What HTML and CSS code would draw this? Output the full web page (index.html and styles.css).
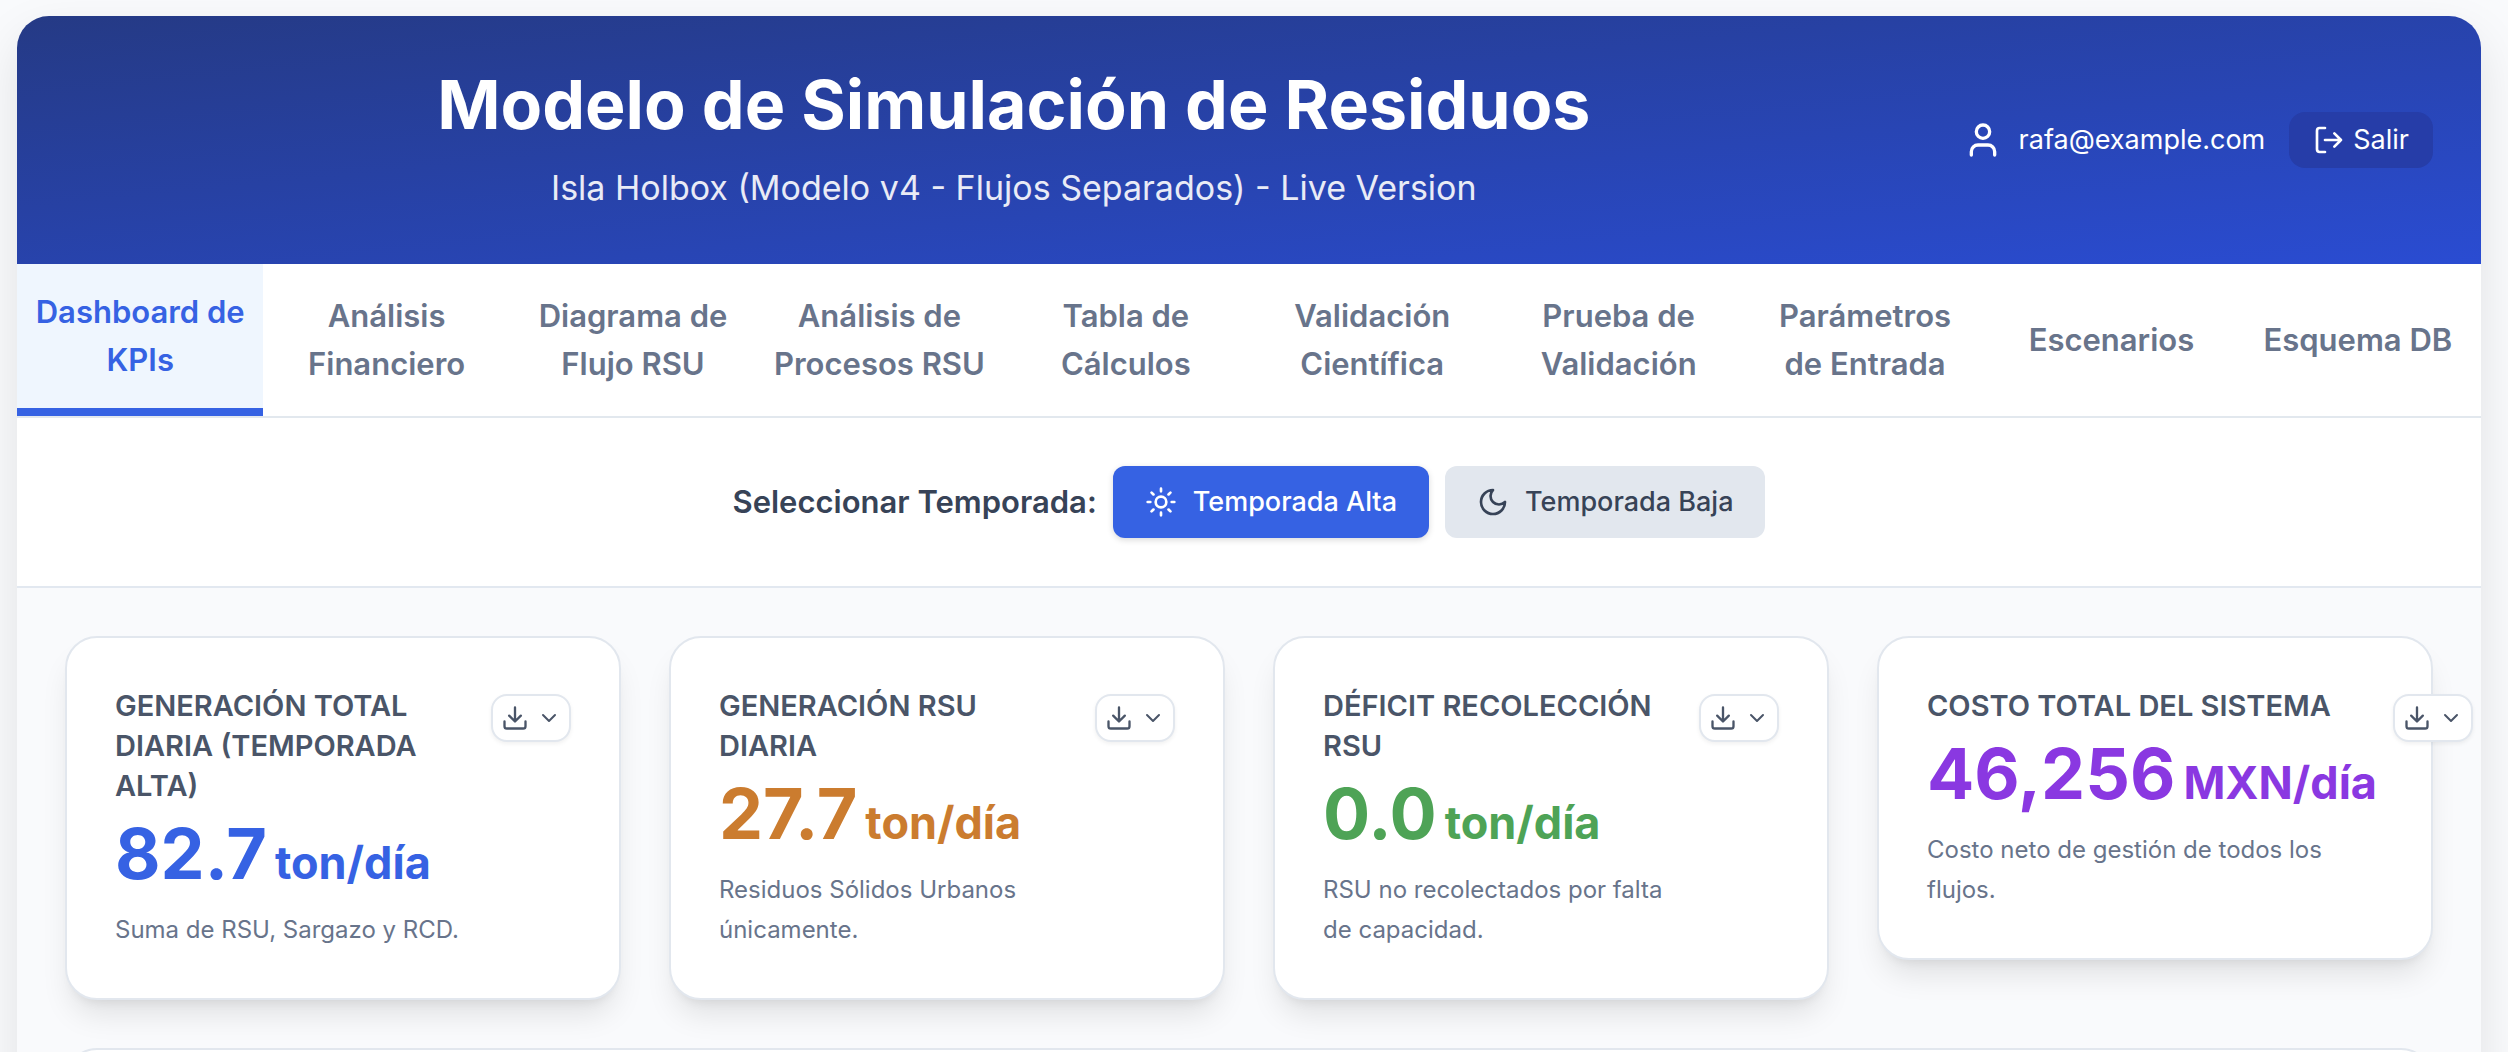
FILE: index.html
```html
<!DOCTYPE html>
<html lang="es">
<head>
<meta charset="utf-8">
<meta name="viewport" content="width=device-width, initial-scale=1">
<title>Modelo de Simulación de Residuos</title>
<link rel="stylesheet" href="styles.css">
</head>
<body>
<svg class="sprite" aria-hidden="true">
  <symbol id="user" viewBox="0 0 24 24"><circle cx="12" cy="7" r="4"/><path d="M19 21v-2a4 4 0 0 0-4-4H9a4 4 0 0 0-4 4v2"/></symbol>
  <symbol id="logout" viewBox="0 0 24 24"><path d="M9 21H5a2 2 0 0 1-2-2V5a2 2 0 0 1 2-2h4"/><path d="M16 17l5-5-5-5M21 12H9"/></symbol>
  <symbol id="sun" viewBox="0 0 24 24"><circle cx="12" cy="12" r="4"/><path d="M12 2v2M12 20v2M4.93 4.93l1.41 1.41M17.66 17.66l1.41 1.41M2 12h2M20 12h2M6.34 17.66l-1.41 1.41M19.07 4.93l-1.41 1.41"/></symbol>
  <symbol id="moon" viewBox="0 0 24 24"><path d="M12 3a6 6 0 0 0 9 9 9 9 0 1 1-9-9Z"/></symbol>
  <symbol id="download" viewBox="0 0 24 24"><path d="M21 15v4a2 2 0 0 1-2 2H5a2 2 0 0 1-2-2v-4M7 10l5 5 5-5M12 15V3"/></symbol>
  <symbol id="chevron" viewBox="0 0 24 24"><path d="M6 9l6 6 6-6"/></symbol>
</svg>
<div class="app">
  <header class="header">
    <div class="header-text">
      <h1>Modelo de Simulación de Residuos</h1>
      <p>Isla Holbox (Modelo v4 - Flujos Separados) - Live Version</p>
    </div>
    <div class="account">
      <div class="account-user">
        <svg class="icon icon-xl" aria-hidden="true"><use href="#user"/></svg>
        <span>rafa@example.com</span>
      </div>
      <button class="logout" type="button"><svg class="icon icon-lg" aria-hidden="true"><use href="#logout"/></svg>Salir</button>
    </div>
  </header>

  <nav class="tabs">
    <button class="tab active" type="button">Dashboard de KPIs</button>
    <button class="tab" type="button">Análisis Financiero</button>
    <button class="tab" type="button">Diagrama de Flujo RSU</button>
    <button class="tab" type="button">Análisis de Procesos RSU</button>
    <button class="tab" type="button">Tabla de Cálculos</button>
    <button class="tab" type="button">Validación Científica</button>
    <button class="tab" type="button">Prueba de Validación</button>
    <button class="tab" type="button">Parámetros de Entrada</button>
    <button class="tab" type="button">Escenarios</button>
    <button class="tab" type="button">Esquema DB</button>
  </nav>

  <section class="season">
    <span class="season-label">Seleccionar Temporada:</span>
    <button class="season-btn selected" type="button"><svg class="icon icon-lg" aria-hidden="true"><use href="#sun"/></svg>Temporada Alta</button>
    <button class="season-btn" type="button"><svg class="icon icon-lg" aria-hidden="true"><use href="#moon"/></svg>Temporada Baja</button>
  </section>

  <main class="content">
    <div class="kpis">
      <article class="card kpi">
        <div class="kpi-body">
          <h2>Generación Total Diaria (Temporada Alta)</h2>
          <p class="value blue">82.7<span class="unit">ton/día</span></p>
          <p class="note">Suma de RSU, Sargazo y RCD.</p>
        </div>
        <button class="export" type="button" aria-label="Exportar"><svg class="icon icon-md" aria-hidden="true"><use href="#download"/></svg><svg class="icon icon-sm" aria-hidden="true"><use href="#chevron"/></svg></button>
      </article>
      <article class="card kpi">
        <div class="kpi-body">
          <h2>Generación RSU Diaria</h2>
          <p class="value orange">27.7<span class="unit">ton/día</span></p>
          <p class="note">Residuos Sólidos Urbanos únicamente.</p>
        </div>
        <button class="export" type="button" aria-label="Exportar"><svg class="icon icon-md" aria-hidden="true"><use href="#download"/></svg><svg class="icon icon-sm" aria-hidden="true"><use href="#chevron"/></svg></button>
      </article>
      <article class="card kpi">
        <div class="kpi-body">
          <h2>Déficit Recolección RSU</h2>
          <p class="value green">0.0<span class="unit">ton/día</span></p>
          <p class="note">RSU no recolectados por falta de capacidad.</p>
        </div>
        <button class="export" type="button" aria-label="Exportar"><svg class="icon icon-md" aria-hidden="true"><use href="#download"/></svg><svg class="icon icon-sm" aria-hidden="true"><use href="#chevron"/></svg></button>
      </article>
      <article class="card kpi">
        <div class="kpi-body">
          <h2>Costo Total del Sistema</h2>
          <p class="value purple">46,256<span class="unit">MXN/día</span></p>
          <p class="note">Costo neto de gestión de todos los flujos.</p>
        </div>
        <button class="export" type="button" aria-label="Exportar"><svg class="icon icon-md" aria-hidden="true"><use href="#download"/></svg><svg class="icon icon-sm" aria-hidden="true"><use href="#chevron"/></svg></button>
      </article>
    </div>
    <section class="card"></section>
  </main>
</div>
</body>
</html>
```
FILE: styles.css
```css
* {
  box-sizing: border-box;
}

body {
  margin: 0;
  height: 100vh;
  overflow: hidden;
  padding: 16px 27px 0 17px;
  background: #f9fafc;
  color: #374357;
  font-family: Inter, "Liberation Sans", sans-serif;
  font-size: 27px;
  line-height: 40px;
}

h1,
h2,
p {
  margin: 0;
}

button {
  border: 0;
  font: inherit;
  color: inherit;
  cursor: pointer;
}

.sprite {
  display: none;
}

.icon {
  flex: none;
  fill: none;
  stroke: currentColor;
  stroke-width: 2;
  stroke-linecap: round;
  stroke-linejoin: round;
}

.icon-xl {
  width: 40px;
  height: 40px;
}

.icon-lg {
  width: 32px;
  height: 32px;
}

.icon-md {
  width: 28px;
  height: 28px;
}

.icon-sm {
  width: 24px;
  height: 24px;
}

.app {
  overflow: hidden;
  border-radius: 32px 32px 0 0;
  background: #fff;
  box-shadow: 0 20px 50px rgba(0, 0, 0, 0.1);
}

/* Header */
.header {
  display: flex;
  align-items: center;
  padding: 48px;
  background: linear-gradient(to bottom right, #253a85, #2a4cd2);
  color: #fff;
}

.header-text {
  flex: 1;
  text-align: center;
}

.header h1 {
  font-size: 68px;
  line-height: 80px;
  font-weight: 700;
}

.header p {
  margin-top: 16px;
  font-size: 34px;
  line-height: 56px;
  color: #e9ebf6;
}

.account {
  display: flex;
  align-items: center;
  gap: 24px;
}

.account-user {
  display: flex;
  align-items: center;
  gap: 16px;
}

.logout {
  display: flex;
  align-items: center;
  gap: 8px;
  padding: 8px 24px;
  border-radius: 16px;
  background: #263da8;
}

/* Navigation tabs */
.tabs {
  display: flex;
  border-bottom: 2px solid #e2e8ee;
}

.tab {
  flex: 1 1 0;
  min-width: 0;
  min-height: 152px;
  padding: 24px 16px;
  background: none;
  color: #68748b;
  font-size: 31px;
  line-height: 48px;
  font-weight: 600;
}

.tab.active {
  border-bottom: 8px solid #3662e3;
  background: #eff6fe;
  color: #3662e3;
}

/* Season selector */
.season {
  display: flex;
  align-items: center;
  justify-content: center;
  gap: 16px;
  padding: 48px;
  border-bottom: 2px solid #e2e8f0;
}

.season-label {
  font-size: 31px;
  font-weight: 600;
}

.season-btn {
  display: flex;
  align-items: center;
  gap: 16px;
  padding: 16px 32px;
  border-radius: 12px;
  background: #e2e7ee;
  font-weight: 500;
}

.season-btn.selected {
  background: #3662e3;
  color: #fff;
  box-shadow: 0 2px 6px rgba(0, 0, 0, 0.15);
}

/* Dashboard */
.content {
  display: grid;
  gap: 48px;
  padding: 48px;
  background: #f9fafc;
}

.card {
  min-height: 320px;
  padding: 48px;
  border: 2px solid #e2e7ee;
  border-radius: 32px;
  background: #fff;
  box-shadow: 0 20px 30px -6px rgba(0, 0, 0, 0.1), 0 8px 12px -8px rgba(0, 0, 0, 0.1);
}

.kpis {
  display: grid;
  grid-template-columns: repeat(4, minmax(0, 1fr));
  align-items: start;
  gap: 48px;
}

.kpi {
  display: flex;
  align-items: flex-start;
  gap: 16px;
}

.kpi-body {
  flex: 1;
}

.kpi h2 {
  color: #4a5568;
  font-size: 29px;
  line-height: 40px;
  font-weight: 600;
  text-transform: uppercase;
}

.value {
  display: flex;
  align-items: baseline;
  gap: 8px;
  margin: 8px 0 16px;
  font-size: 70px;
  line-height: 80px;
  font-weight: 700;
  white-space: nowrap;
}

.unit {
  font-size: 45px;
  line-height: 48px;
}

.note {
  color: #68748b;
  font-size: 24px;
}

.blue {
  color: #3662e3;
}

.orange {
  color: #cb7c2f;
}

.green {
  color: #4ea356;
}

.purple {
  color: #8a38e1;
}

.export {
  display: flex;
  flex: none;
  align-items: center;
  gap: 8px;
  height: 48px;
  margin-top: 8px;
  padding: 0 8px;
  border: 2px solid #e2e7ee;
  border-radius: 16px;
  background: #fff;
  color: #4a5568;
  box-shadow: 0 2px 4px rgba(0, 0, 0, 0.06);
}
```
